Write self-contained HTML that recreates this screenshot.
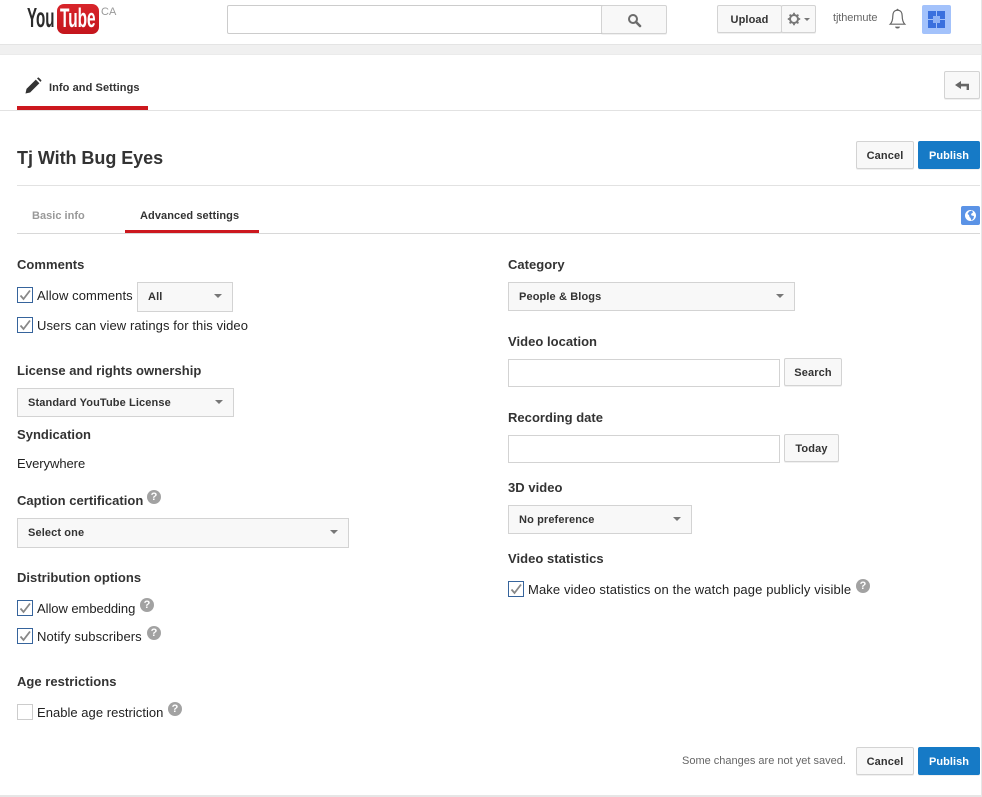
<!DOCTYPE html>
<html><head><meta charset="utf-8"><style>
html,body{margin:0;padding:0;background:#fff;}
body{width:982px;height:797px;position:relative;overflow:hidden;font-family:"Liberation Sans",Arial,sans-serif;color:#333;}
.a{position:absolute;}
.t{position:absolute;white-space:nowrap;line-height:16px;}
.h{font-size:13px;font-weight:bold;color:#333;letter-spacing:.03px;}
.l{font-size:13px;color:#222;letter-spacing:.08px;}
.sel,.btn{position:absolute;box-sizing:border-box;background:#f8f8f8;border:1px solid #d3d3d3;font-size:11px;font-weight:bold;color:#333;white-space:nowrap;letter-spacing:.12px;}
.sel{padding-left:10px;}
.sel i{position:absolute;top:11px;width:0;height:0;border:4px solid transparent;border-top:4px solid #777;border-bottom:0;}
.btn{text-align:center;border-radius:2px;box-shadow:0 1px 0 rgba(0,0,0,.06);}
.pub{background:#167ac6;border-color:#167ac6;color:#fff;letter-spacing:.05px;}
.inp{position:absolute;box-sizing:border-box;background:#fff;border:1px solid #d3d3d3;}
.cb{position:absolute;width:16px;height:16px;box-sizing:border-box;border:1px solid #36649c;background:#fff;}
.cb svg{position:absolute;left:0;top:0;}
.off{border-color:#ccc;}
.q{position:absolute;width:14px;height:14px;border-radius:50%;background:#a2a2a2;color:#fff;font-size:11px;font-weight:bold;line-height:14px;text-align:center;}
.hr{position:absolute;height:1px;background:#e2e2e2;}
</style></head><body>

<!-- header -->
<div class="t" style="left:27px;top:3px;font-size:28px;line-height:30px;font-weight:bold;color:#2b2b2b;letter-spacing:0;transform:scaleX(.54);transform-origin:0 0;">You</div>
<div class="a" style="left:57px;top:4px;width:42px;height:30px;background:linear-gradient(#d8252b,#c4151c);border-radius:7px;"></div>
<div class="t" style="left:60px;top:3px;font-size:27px;line-height:30px;font-weight:bold;color:#fff;letter-spacing:0;transform:scaleX(.57);transform-origin:0 0;">Tube</div>
<div class="t" style="left:101px;top:4px;font-size:11px;color:#999;">CA</div>

<div class="inp" style="left:227px;top:5px;width:376px;height:29px;border-color:#ccc;border-radius:2px 0 0 2px;"></div>
<div class="btn" style="left:601px;top:5px;width:66px;height:29px;border-color:#d3d3d3;"></div>
<svg class="a" style="left:627px;top:13px;" width="15" height="15" viewBox="0 0 15 15"><circle cx="6" cy="6" r="4" fill="none" stroke="#6c6c6c" stroke-width="2"/><path d="M9 9l4 4" stroke="#6c6c6c" stroke-width="2.600" stroke-linecap="round"/></svg>

<div class="btn" style="left:717px;top:5px;width:65px;height:28px;line-height:28px;">Upload</div>
<div class="btn" style="left:781px;top:5px;width:35px;height:28px;"></div>
<svg class="a" style="left:787px;top:12px;" width="14" height="14" viewBox="0 0 14 14"><circle cx="7" cy="7" r="4" fill="none" stroke="#777" stroke-width="2"/><path d="M7 .8v2.400M7 10.800v2.400M.8 7h2.400M10.800 7h2.400M2.600 2.600l1.700 1.700M9.700 9.700l1.700 1.700M2.600 11.400l1.700-1.700M9.700 4.300l1.700-1.700" stroke="#777" stroke-width="1.800"/></svg>
<div class="a" style="left:804px;top:18px;width:0;height:0;border:3px solid transparent;border-top:3px solid #777;border-bottom:0;"></div>
<div class="t" style="left:833px;top:10px;font-size:11px;color:#666;letter-spacing:-.1px;">tjthemute</div>
<svg class="a" style="left:888px;top:8px;" width="19" height="22" viewBox="0 0 19 22"><path d="M9.500 2.200C6 2.200 4.800 5 4.800 8c0 3.600-.6 6.200-2.600 8.200h14.600c-2-2-2.600-4.600-2.600-8.200 0-3-1.200-5.800-4.700-5.800z" fill="none" stroke="#666" stroke-width="1.200"/><circle cx="9.500" cy="1.800" r="1" fill="#666"/><path d="M7 18.600h5c-.4 1.400-1.200 1.900-2.500 1.900S7.400 20 7 18.600z" fill="#666"/></svg>
<div class="a" style="left:922px;top:5px;width:29px;height:29px;background:#a3c2fb;border-radius:2px;"></div>
<div class="a" style="left:928px;top:11px;width:8px;height:8px;background:#3a70de;"></div>
<div class="a" style="left:937px;top:11px;width:8px;height:8px;background:#3a70de;"></div>
<div class="a" style="left:928px;top:20px;width:8px;height:8px;background:#3a70de;"></div>
<div class="a" style="left:937px;top:20px;width:8px;height:8px;background:#3a70de;"></div>
<div class="a" style="left:933px;top:16px;width:7px;height:7px;background:#8fb2f5;"></div>

<div class="a" style="left:0;top:44px;width:982px;height:11px;background:#f0f0f0;border-top:1px solid #e4e4e4;box-sizing:border-box;border-bottom:1px solid #ebebeb;"></div>

<!-- sub header -->
<svg class="a" style="left:24px;top:77px;" width="18" height="18" viewBox="0 0 18 18"><path d="M1.500 16.500l1-4.600L11.800 2.600l3.600 3.600L6.100 15.500z M13 1.400l.8-.7c.4-.3.8-.3 1.100 0l2.300 2.300c.3.300.3.700 0 1.100l-.8.800z" fill="#333"/></svg>
<div class="t" style="left:49px;top:80px;font-size:11px;font-weight:bold;color:#333;letter-spacing:.08px;">Info and Settings</div>
<div class="a" style="left:17px;top:106px;width:131px;height:4px;background:#cc181e;"></div>
<div class="hr" style="left:0;top:110px;width:982px;"></div>
<div class="btn" style="left:944px;top:71px;width:36px;height:28px;"></div>
<svg class="a" style="left:955px;top:81px;" width="15" height="10" viewBox="0 0 15 10"><path d="M0 4l6-4v2.800h8V9h-2.400V5.400H6V8z" fill="#666"/></svg>

<!-- title -->
<div class="t" style="left:17px;top:147px;font-size:18px;line-height:22px;font-weight:bold;color:#333;letter-spacing:-.05px;">Tj With Bug Eyes</div>
<div class="btn" style="left:856px;top:141px;width:58px;height:28px;line-height:28px;">Cancel</div>
<div class="btn pub" style="left:918px;top:141px;width:62px;height:28px;line-height:28px;">Publish</div>
<div class="hr" style="left:17px;top:185px;width:963px;"></div>

<!-- tabs -->
<div class="t" style="left:32px;top:208px;font-size:11px;font-weight:bold;color:#999;letter-spacing:.02px;">Basic info</div>
<div class="t" style="left:140px;top:208px;font-size:11px;font-weight:bold;color:#333;letter-spacing:.08px;">Advanced settings</div>
<div class="a" style="left:125px;top:230px;width:134px;height:3px;background:#cc181e;"></div>
<div class="hr" style="left:17px;top:233px;width:963px;background:#d8d8d8;"></div>
<div class="a" style="left:961px;top:206px;width:19px;height:19px;background:#5b93e6;border-radius:2px;"></div>
<svg class="a" style="left:964px;top:209px;" width="13" height="13" viewBox="0 0 13 13"><circle cx="6.500" cy="6.500" r="5.500" fill="#fff"/><path d="M5 2.500l3-1 1 2-2 1.500.5 1.500 2.500.5-.5 2.500-2 2-1-2.500-1-1-.5-2-1.500-1z" fill="#5b93e6"/></svg>

<!-- left col -->
<div class="t h" style="left:17px;top:257px;">Comments</div>
<div class="cb" style="left:17px;top:287px;"><svg width="14" height="14" viewBox="0 0 14 14"><path d="M2.500 7.500l3 3.500L12 2.500" fill="none" stroke="#888" stroke-width="1.800"/></svg></div>
<div class="t l" style="left:37px;top:288px;">Allow comments</div>
<div class="sel" style="left:137px;top:282px;width:96px;height:30px;line-height:28px;">All<i style="left:76px;"></i></div>
<div class="cb" style="left:17px;top:317px;"><svg width="14" height="14" viewBox="0 0 14 14"><path d="M2.500 7.500l3 3.500L12 2.500" fill="none" stroke="#888" stroke-width="1.800"/></svg></div>
<div class="t l" style="left:37px;top:318px;">Users can view ratings for this video</div>

<div class="t h" style="left:17px;top:363px;">License and rights ownership</div>
<div class="sel" style="left:17px;top:388px;width:217px;height:29px;line-height:28px;">Standard YouTube License<i style="left:197px;"></i></div>
<div class="t h" style="left:17px;top:427px;">Syndication</div>
<div class="t l" style="left:17px;top:456px;letter-spacing:-.05px;">Everywhere</div>

<div class="t h" style="left:17px;top:493px;">Caption certification</div>
<div class="q" style="left:147px;top:490px;">?</div>
<div class="sel" style="left:17px;top:518px;width:332px;height:30px;line-height:28px;">Select one<i style="left:312px;"></i></div>

<div class="t h" style="left:17px;top:570px;">Distribution options</div>
<div class="cb" style="left:17px;top:600px;"><svg width="14" height="14" viewBox="0 0 14 14"><path d="M2.500 7.500l3 3.500L12 2.500" fill="none" stroke="#888" stroke-width="1.800"/></svg></div>
<div class="t l" style="left:37px;top:601px;letter-spacing:-.05px;">Allow embedding</div>
<div class="q" style="left:140px;top:598px;">?</div>
<div class="cb" style="left:17px;top:628px;"><svg width="14" height="14" viewBox="0 0 14 14"><path d="M2.500 7.500l3 3.500L12 2.500" fill="none" stroke="#888" stroke-width="1.800"/></svg></div>
<div class="t l" style="left:37px;top:629px;">Notify subscribers</div>
<div class="q" style="left:147px;top:626px;">?</div>

<div class="t h" style="left:17px;top:674px;">Age restrictions</div>
<div class="cb off" style="left:17px;top:704px;"></div>
<div class="t l" style="left:37px;top:705px;letter-spacing:.03px;">Enable age restriction</div>
<div class="q" style="left:168px;top:702px;">?</div>

<!-- right col -->
<div class="t h" style="left:508px;top:257px;">Category</div>
<div class="sel" style="left:508px;top:282px;width:287px;height:29px;line-height:28px;">People &amp; Blogs<i style="left:267px;"></i></div>
<div class="t h" style="left:508px;top:334px;">Video location</div>
<div class="inp" style="left:508px;top:359px;width:272px;height:28px;"></div>
<div class="btn" style="left:784px;top:358px;width:58px;height:28px;line-height:28px;">Search</div>
<div class="t h" style="left:508px;top:410px;">Recording date</div>
<div class="inp" style="left:508px;top:435px;width:272px;height:28px;"></div>
<div class="btn" style="left:784px;top:434px;width:55px;height:28px;line-height:28px;">Today</div>
<div class="t h" style="left:508px;top:480px;">3D video</div>
<div class="sel" style="left:508px;top:505px;width:184px;height:29px;line-height:28px;">No preference<i style="left:164px;"></i></div>
<div class="t h" style="left:508px;top:551px;">Video statistics</div>
<div class="cb" style="left:508px;top:581px;"><svg width="14" height="14" viewBox="0 0 14 14"><path d="M2.500 7.500l3 3.500L12 2.500" fill="none" stroke="#888" stroke-width="1.800"/></svg></div>
<div class="t l" style="left:528px;top:582px;letter-spacing:.12px;">Make video statistics on the watch page publicly visible</div>
<div class="q" style="left:856px;top:579px;">?</div>

<!-- footer -->
<div class="t" style="left:682px;top:753px;font-size:11px;color:#666;letter-spacing:0;">Some changes are not yet saved.</div>
<div class="btn" style="left:856px;top:747px;width:58px;height:28px;line-height:28px;">Cancel</div>
<div class="btn pub" style="left:918px;top:747px;width:62px;height:28px;line-height:28px;">Publish</div>
<div class="a" style="left:0;top:795px;width:982px;height:2px;background:#e6e6e6;"></div>
<div class="a" style="left:981px;top:0;width:1px;height:797px;background:#e6e6e6;"></div>
</body></html>
